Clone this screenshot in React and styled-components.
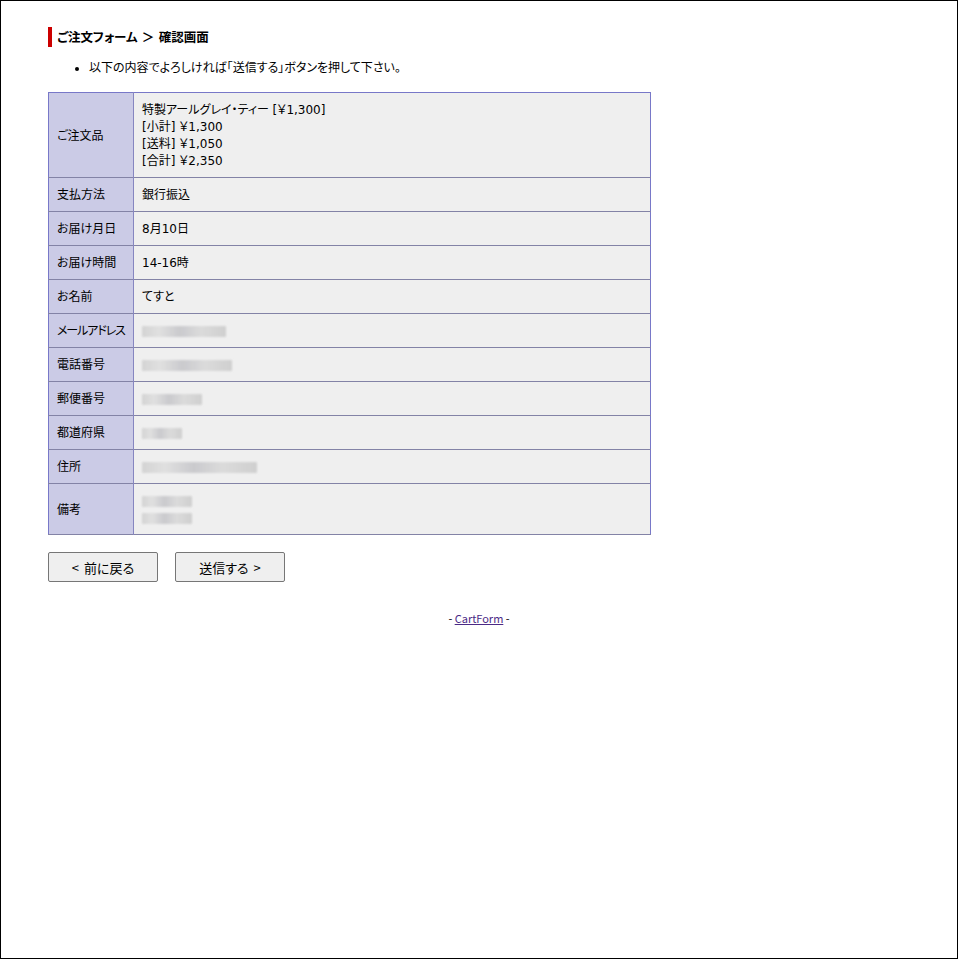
import React from "react";
import styled, { createGlobalStyle } from "styled-components";

const Global = createGlobalStyle`
  html, body { margin: 0; padding: 0; background: #fff; }
  body {
    font-family: "DejaVu Sans", "Noto Sans CJK JP", sans-serif;
    font-feature-settings: "palt";
    color: #000;
    font-size: 12px;
  }
`;

const Frame = styled.div`
  box-sizing: border-box;
  height: 959px;
  border: 1px solid #000;
  padding: 26px 47px 0 47px;
`;

const Heading = styled.h1`
  margin: 0;
  font-size: 12.5px;
  font-weight: bold;
  line-height: 18px;
  padding: 2px 0 0 5px;
  border-left: 4px solid #cc0000;
`;

const Notes = styled.ul`
  margin: 13px 0 0 0;
  padding-left: 41px;
  line-height: 17px;
  font-size: 12px;
`;

const Table = styled.table`
  margin-top: 15px;
  width: 603px;
  table-layout: fixed;
  border-collapse: collapse;
  border: 1px solid #7878c8;
  font-size: 12px;
  line-height: 17px;
`;

const Row = styled.tr`
  border-bottom: 1px solid #8383a6;
`;

const Label = styled.th`
  width: 68px;
  text-align: left;
  font-weight: normal;
  background: #cbcbe6;
  padding: 9px 8px 7px;
  border-right: 1px solid #8686c0;
  white-space: nowrap;
  overflow: visible;
  letter-spacing: ${(p) => (p.$tight ? "-1.1px" : "0")};
`;

const Value = styled.td`
  background: #efefef;
  padding: 9px 8px 7px;
`;

const Blur = styled.span`
  display: block;
  width: ${(p) => p.w}px;
  height: 11px;
  margin: 3px 0;
  background: linear-gradient(90deg, #cfcfcf, #dedede 20%, #c4c4c8 45%, #d8d8d8 70%, #cacaca);
  filter: blur(1.2px);
  opacity: 0.85;
  & + & {
    margin-top: 6px;
  }
`;

const Buttons = styled.div`
  display: flex;
  gap: 17px;
  margin-top: 17px;
`;

const Button = styled.button`
  width: 110px;
  height: 30px;
  background: #efefef;
  border: 1px solid #767676;
  border-radius: 2px;
  font-family: "Noto Sans CJK JP", sans-serif;
  font-feature-settings: "palt";
  font-size: 13px;
  color: #000;
  padding: 0;
  word-spacing: 2px;
`;

const Footer = styled.div`
  text-align: center;
  font-family: "Noto Sans CJK JP", sans-serif;
  font-size: 11px;
  margin-top: 29px;
  line-height: 14px;
`;

const Link = styled.a`
  color: #4b2a86;
`;

const rows = [
  ["支払方法", "銀行振込"],
  ["お届け月日", "8月10日"],
  ["お届け時間", "14-16時"],
  ["お名前", "てすと"],
];

const blurred = [
  ["メールアドレス", [84], true],
  ["電話番号", [90]],
  ["郵便番号", [60]],
  ["都道府県", [40]],
  ["住所", [115]],
  ["備考", [50, 50]],
];

export default function App() {
  return (
    <>
      <Global />
      <Frame>
        <Heading>ご注文フォーム ＞ 確認画面</Heading>
        <Notes>
          <li>以下の内容でよろしければ「送信する」ボタンを押して下さい。</li>
        </Notes>
        <Table>
          <tbody>
            <Row>
              <Label>ご注文品</Label>
              <Value>
                特製アールグレイ・ティー [￥1,300]
                <br />
                [小計] ￥1,300
                <br />
                [送料] ￥1,050
                <br />
                [合計] ￥2,350
              </Value>
            </Row>
            {rows.map(([k, v]) => (
              <Row key={k}>
                <Label>{k}</Label>
                <Value>{v}</Value>
              </Row>
            ))}
            {blurred.map(([k, ws, tight]) => (
              <Row key={k}>
                <Label $tight={tight}>{k}</Label>
                <Value>
                  {ws.map((w, i) => (
                    <Blur key={i} w={w} />
                  ))}
                </Value>
              </Row>
            ))}
          </tbody>
        </Table>
        <Buttons>
          <Button>&lt; 前に戻る</Button>
          <Button>送信する &gt;</Button>
        </Buttons>
        <Footer>
          - <Link href="#">CartForm</Link> -
        </Footer>
      </Frame>
    </>
  );
}
